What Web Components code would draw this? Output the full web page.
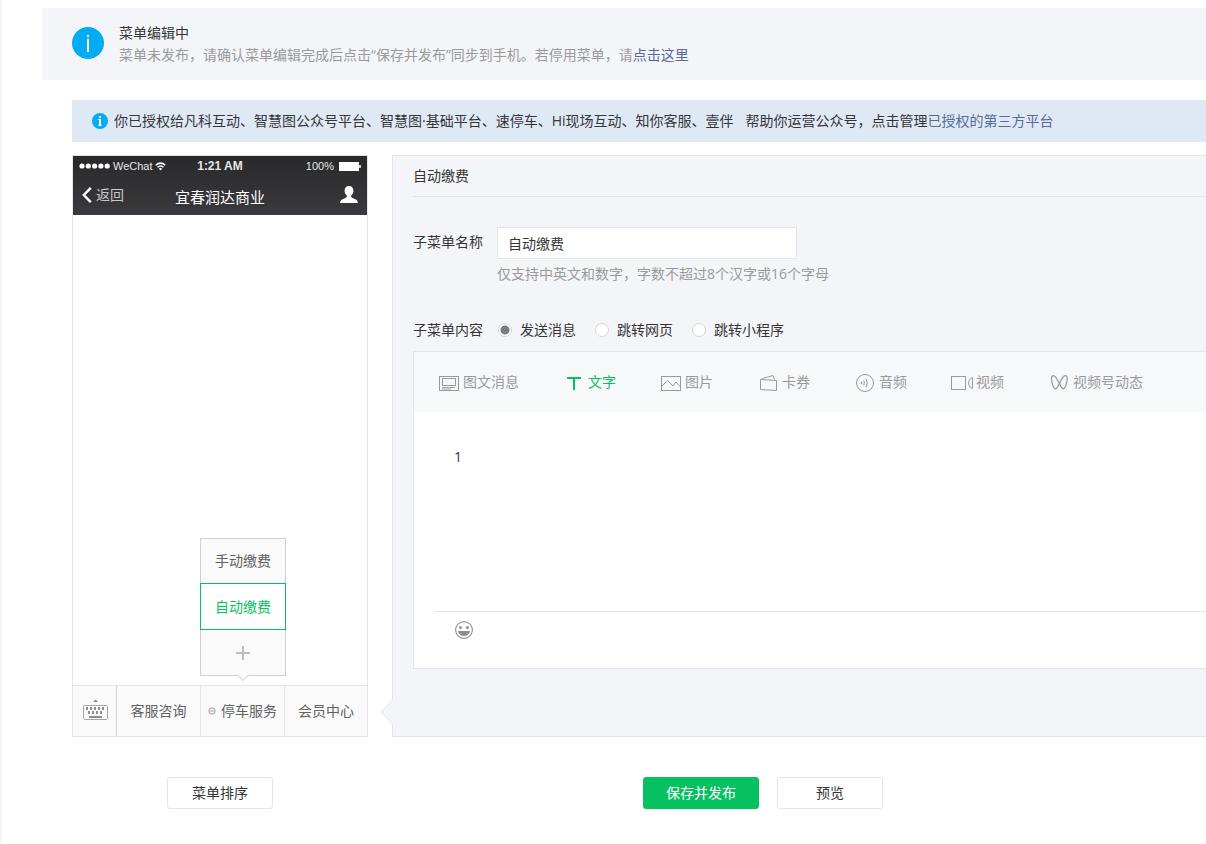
<!DOCTYPE html>
<html lang="zh-CN">
<head>
<meta charset="utf-8">
<title>自定义菜单</title>
<style>
  html { height: 100%; }
  body {
    margin: 0;
    min-height: 100%;
    background: #fff;
    overflow-x: hidden;
    color: #353535;
    font: 14px/22px "Open Sans", "Noto Sans CJK SC", sans-serif;
    --panel: #f4f5f9;
    --line: #e4e5e9;
    --muted: #9a9a9a;
    --green: #07c160;
    --link: #576b95;
  }
</style>
</head>
<body>
<menu-page></menu-page>

<script>
function define(name, markup, setup) {
  const template = document.createElement('template');
  template.innerHTML = markup;
  customElements.define(name, class extends HTMLElement {
    constructor() {
      super();
      this.attachShadow({ mode: 'open' }).append(template.content.cloneNode(true));
      if (setup) setup.call(this, this.shadowRoot);
    }
  });
}

define('info-icon', `
  <style>
    :host { display: block; flex: none; width: 16px; height: 16px; }
    :host([large]) { width: 32px; height: 32px; }
    svg { display: block; width: 100%; height: 100%; }
    .thin { display: none; }
    :host([large]) .thin { display: inline; }
    :host([large]) .thick { display: none; }
  </style>
  <svg viewBox="0 0 32 32" aria-hidden="true">
    <circle cx="16" cy="16" r="16" fill="#00adf2"/>
    <g class="thin" fill="#fff"><rect x="15" y="8" width="2" height="2.4"/><rect x="15" y="12" width="2" height="13"/></g>
    <g class="thick" fill="#fff"><rect x="14" y="6" width="4" height="4"/><path d="M12 12h6v12h2v2h-8v-2h2V14h-2z"/></g>
  </svg>`);

define('status-notice', `
  <style>
    :host { display: flex; align-items: center; gap: 15px; padding: 14px 30px; background: var(--panel); }
    info-icon { margin-bottom: 2px; }
    h1, p { margin: 0; font-size: 14px; font-weight: 400; }
    p { color: var(--muted); }
  </style>
  <info-icon large></info-icon>
  <div><h1><slot name="title"></slot></h1><p><slot></slot></p></div>`);

define('auth-notice', `
  <style>
    :host { display: flex; align-items: center; gap: 6px; padding: 10px 20px; background: #dfe9f5; white-space: nowrap; }
    p { display: flex; gap: 12px; margin: 0; }
  </style>
  <info-icon></info-icon>
  <p><slot></slot></p>`);

define('phone-header', `
  <style>
    :host { display: block; height: 59px; color: #fff; background: linear-gradient(#29292b, #3a3a3e); }
    .status, .nav { display: grid; grid-template-columns: 1fr auto 1fr; align-items: center; padding: 0 6px; }
    .status { height: 20px; font: 11px/20px "Liberation Sans", Arial, sans-serif; color: #e6e6e6; }
    .left, .right { display: flex; align-items: center; gap: 2px; }
    .right { justify-content: flex-end; gap: 5px; }
    .time { font-size: 12px; font-weight: 700; }
    .nav { height: 37px; padding: 0 9px; }
    .back { display: flex; align-items: center; gap: 4px; padding: 0; border: 0; background: none; color: #c8c8c8; font: inherit; }
    .name { padding-top: 4px; font-size: 15px; }
    svg { display: block; flex: none; }
  </style>
  <div class="status">
    <span class="left">
      <svg width="32" height="6" fill="#fff"><circle cx="3" cy="3" r="2.6"/><circle cx="9.3" cy="3" r="2.6"/><circle cx="15.6" cy="3" r="2.6"/><circle cx="21.9" cy="3" r="2.6"/><circle cx="28.2" cy="3" r="2.6"/></svg>
      <span>WeChat</span>
      <svg width="11" height="9" viewBox="0 0 11 9" fill="none" stroke="#fff" stroke-width="1.5"><path d="M.7 3.2Q5.5-.9 10.3 3.2M2.5 5.3q3-2.6 6 0"/><path d="M3.7 6.6L5.5 8.6l1.8-2q-1.8-1.3-3.6 0z" fill="#fff" stroke="none"/></svg>
    </span>
    <span class="time">1:21 AM</span>
    <span class="right">
      <span>100%</span>
      <svg width="22" height="9"><rect width="20" height="9" fill="#fff"/><rect x="20" y="3" width="2" height="3" fill="#ccc"/></svg>
    </span>
  </div>
  <div class="nav">
    <button class="back" type="button">
      <svg width="10" height="16" viewBox="0 0 10 16" fill="none" stroke="#fff" stroke-width="2.4"><path d="M8.8.8L1.8 8l7 7.2"/></svg>
      返回
    </button>
    <span class="name"><slot></slot></span>
    <span class="right">
      <svg width="18" height="18" viewBox="0 0 18 18" fill="#fff"><path d="M9 0c3 0 4.600 2 4.400 5-.1 2-1 3.400-2.200 4.600-.5 1.400.1 1.900 1.800 2.600 3 1.200 4.800 1.700 4.800 4.800H.2c0-3.100 1.800-3.600 4.800-4.800 1.700-.7 2.300-1.200 1.800-2.600C5.600 8.400 4.700 7 4.600 5 4.400 2 6 0 9 0z"/></svg>
    </span>
  </div>`);

define('sub-menu', `
  <style>
    :host { display: block; width: 86px; box-sizing: border-box; border: 1px solid #d0d0d0; background: #fafafa; }
    button { display: flex; align-items: center; justify-content: center; width: 100%; height: 44px; padding: 0; border: 0; background: none; color: #616161; font: inherit; }
    .current { box-sizing: border-box; width: 86px; height: 47px; margin: 0 -1px; border: 1px solid var(--green); background: #fff; color: var(--green); }
    .add { height: 45px; }
    .tip { position: absolute; top: calc(100% - 1px); left: 50%; margin-left: -6px; display: block; }
  </style>
  <button type="button">手动缴费</button>
  <button type="button" class="current">自动缴费</button>
  <button type="button" class="add" aria-label="添加子菜单">
    <svg width="14" height="14" stroke="#bdbdbd" stroke-width="2"><path d="M7 0v14M0 7h14"/></svg>
  </button>
  <svg class="tip" width="12" height="8"><path d="M0 0h12v1L6 7 0 1z" fill="#fafafa"/><path d="M.500 1L6 6.500 11.500 1" fill="none" stroke="#dcdcdc" stroke-width="1.200"/></svg>`);

define('phone-tabs', `
  <style>
    :host { display: flex; height: 50px; border-top: 1px solid var(--line); background: #fafafa; }
    button { display: flex; align-items: center; justify-content: center; gap: 5px; width: 100%; height: 100%; padding: 0; border: 0; background: none; color: #616161; font: inherit; }
    .keys { flex: none; width: 43px; }
    .keys button { padding-left: 2px; }
    .tab { position: relative; box-sizing: border-box; flex: 0 0 84px; border-left: 1px solid var(--line); }
    .tab:last-child { flex: 1; }
    .keys + .tab { border-color: #d0d0d0; }
    sub-menu { position: absolute; left: -1px; bottom: calc(100% + 10px); }
    svg { display: block; }
  </style>
  <div class="keys">
    <button type="button" aria-label="键盘">
      <svg width="25" height="24" viewBox="0 0 25 24" fill="#8a8d92"><path d="M10 3L12.500 .5 15 3z"/><rect x=".5" y="6.500" width="24" height="14" rx="1" fill="none" stroke="#a3a5a9"/><path d="M3 8h2v3H3zM7 8h2v3H7zM11 8h2v3h-2zM15 8h2v3h-2zM19 8h2v3h-2zM5 12h2v3H5zM9 12h2v3H9zM13 12h2v3h-2zM17 12h2v3h-2zM6 17h13v2H6z"/></svg>
    </button>
  </div>
  <div class="tab"><button type="button">客服咨询</button></div>
  <div class="tab">
    <button type="button">
      <svg width="8" height="8" fill="none" stroke="#bdbdbd" stroke-width="1.400"><circle cx="4" cy="4" r="3"/><path d="M2 4h4"/></svg>
      停车服务
    </button>
    <sub-menu></sub-menu>
  </div>
  <div class="tab"><button type="button">会员中心</button></div>`);

define('phone-preview', `
  <style>
    :host { display: flex; flex-direction: column; flex: none; box-sizing: border-box; width: 296px; min-height: 582px; border: 1px solid var(--line); background: #fff; }
    .screen { flex: 1; }
  </style>
  <phone-header><slot></slot></phone-header>
  <div class="screen"></div>
  <phone-tabs></phone-tabs>`);

const ICONS = {
  article: '<rect x=".5" y="4.500" width="19" height="14"/><rect x="3.500" y="6.500" width="13" height="7"/><path d="M3 15.500h13M3 17h9" stroke-width=".9"/>',
  text: '<path d="M3 6h14M10 6v12" stroke-width="2"/>',
  image: '<rect x=".5" y="4.500" width="19" height="14"/><path d="M1 14l5.500-5.500L12 14l3-4 4.500 5"/>',
  card: '<path d="M2.500 7.500L18.500 8.500v10L2.500 17.500zM4.500 6.500L15 3.500l1.500 4"/>',
  audio: '<circle cx="10" cy="11" r="8.500"/><path d="M6.500 9.800v2.400" stroke-width="1.500"/><path d="M8.700 8.500q1.400 2.500 0 5M11 6.700q2.700 4.300 0 8.600"/>',
  video: '<rect x="-.5" y="4.500" width="14" height="13"/><path d="M20.500 5.500v11q-4-1-4-5.500t4-5.500z"/>',
  channel: '<path d="M3.200 4.200C1.500 6 3.200 14 5.600 16.500c2 1.500 3.600-2.500 5.400-6 1.600-3.500 3.800-8 6.200-6.700 2.200 1.500.2 10.200-2 12.500-2 1.700-4-3.300-5.600-6.300-1.500-3-4.300-8-6.400-5.800z" stroke-width="1.300"/>'
};

define('content-tab', `
  <style>
    :host { display: block; flex: none; color: var(--muted); }
    :host([current]) { color: var(--green); }
    button { display: flex; align-items: center; padding: 0; border: 0; background: none; color: inherit; font: inherit; white-space: nowrap; }
    svg { display: block; overflow: visible; fill: none; stroke: currentColor; }
  </style>
  <button type="button"><svg width="24" height="20" viewBox="0 0 24 20" aria-hidden="true"></svg><slot></slot></button>`,
  function (root) {
    root.querySelector('svg').innerHTML = ICONS[this.getAttribute('icon')] || '';
  });

define('message-editor', `
  <style>
    :host { display: block; border: 1px solid var(--line); border-right: 0; background: #fff; }
    nav { display: flex; align-items: center; gap: 45px; height: 60px; padding-left: 25px; background: #f7f8fa; }
    textarea { display: block; box-sizing: border-box; width: 100%; height: 199px; padding: 34px 40px; border: 0; outline: 0; resize: none; background: none; color: inherit; font: inherit; }
    footer { margin-left: 20px; padding: 9px 21px 29px; border-top: 1px solid var(--line); }
    footer button { display: block; padding: 0; border: 0; background: none; }
    svg { display: block; }
  </style>
  <nav>
    <content-tab icon="article">图文消息</content-tab>
    <content-tab icon="text" current>文字</content-tab>
    <content-tab icon="image">图片</content-tab>
    <content-tab icon="card">卡券</content-tab>
    <content-tab icon="audio">音频</content-tab>
    <content-tab icon="video">视频</content-tab>
    <content-tab icon="channel">视频号动态</content-tab>
  </nav>
  <textarea aria-label="消息内容">1</textarea>
  <footer>
    <button type="button" aria-label="表情">
      <svg width="18" height="18" viewBox="0 0 18 18" fill="#8f8f8f"><circle cx="9" cy="9" r="8.400" fill="none" stroke="#8f8f8f" stroke-width="1.100"/><circle cx="5.500" cy="6.500" r="1.500"/><circle cx="12.500" cy="6.500" r="1.500"/><path d="M3 10h12q-1 5-6 5t-6-5z"/></svg>
    </button>
  </footer>`);

define('menu-form', `
  <style>
    :host { position: relative; display: block; flex: 1; min-width: 0; box-sizing: border-box; padding: 0 0 67px 20px; border: 1px solid var(--line); border-right: 0; background: var(--panel); }
    h2 { margin: 0; padding: 9px 0; border-bottom: 1px solid var(--line); font-size: 14px; font-weight: 400; }
    .row { display: flex; gap: 14px; }
    .field { padding-top: 30px; }
    .caption { flex: none; width: 70px; padding-top: 4px; }
    input[type=text] { display: block; box-sizing: border-box; width: 300px; height: 32px; padding: 0 10px; border: 1px solid var(--line); border-radius: 0; outline: 0; background: #fff; color: inherit; font: inherit; }
    .hint { margin: 0; padding-top: 4px; color: var(--muted); }
    fieldset { display: flex; align-items: center; gap: 15px; margin: 0; padding: 34px 0 10px; border: 0; }
    .choices { display: flex; gap: 19px; }
    .choices label { display: flex; align-items: center; gap: 8px; }
    input[type=radio] { appearance: none; width: 14px; height: 14px; margin: 0; border: 1px solid #d5d6da; border-radius: 50%; background: #fff; }
    input[type=radio]:checked { background: radial-gradient(circle, #7c7c7c 4px, #fff 5px); }
    .pointer { position: absolute; left: -13px; bottom: 11px; display: block; }
  </style>
  <h2>自动缴费</h2>
  <div class="row field">
    <label class="caption" for="name">子菜单名称</label>
    <div>
      <input type="text" id="name" value="自动缴费">
      <p class="hint">仅支持中英文和数字，字数不超过8个汉字或16个字母</p>
    </div>
  </div>
  <fieldset aria-labelledby="kind">
    <span id="kind">子菜单内容</span>
    <div class="choices">
      <label><input type="radio" name="kind" checked>发送消息</label>
      <label><input type="radio" name="kind">跳转网页</label>
      <label><input type="radio" name="kind">跳转小程序</label>
    </div>
  </fieldset>
  <message-editor></message-editor>
  <svg class="pointer" width="13" height="26"><path d="M13 0v26L1 13z" fill="#f4f5f9"/><path d="M12.500 1L1 13l11.500 12" fill="none" stroke="#e4e5e9"/></svg>`);

define('action-button', `
  <style>
    :host { display: block; }
    button { display: block; box-sizing: border-box; height: 32px; min-width: 106px; padding: 0 22px; border: 1px solid var(--line); border-radius: 3px; background: #fff; color: inherit; font: inherit; }
    :host([primary]) button { border-color: var(--green); background: var(--green); color: #fff; }
  </style>
  <button type="button"><slot></slot></button>`);

define('menu-page', `
  <style>
    :host { display: block; box-sizing: border-box; min-height: 100vh; padding: 8px 0 35px 40px; border-left: 2px solid #f6f6f6; }
    main { padding: 20px 0 0 30px; }
    .workspace { display: flex; gap: 24px; padding-top: 13px; }
    .actions { display: flex; padding-top: 40px; }
    .sort { display: flex; justify-content: center; width: 296px; }
    .publish { display: flex; gap: 18px; padding-left: 275px; }
    a { color: var(--link); text-decoration: none; }
  </style>
  <status-notice><span slot="title">菜单编辑中</span>菜单未发布，请确认菜单编辑完成后点击“保存并发布”同步到手机。若停用菜单，请<a href="#stop">点击这里</a></status-notice>
  <main>
    <auth-notice><span>你已授权给凡科互动、智慧图公众号平台、智慧图·基础平台、速停车、Hi现场互动、知你客服、壹伴</span><span>帮助你运营公众号，点击管理<a href="#third">已授权的第三方平台</a></span></auth-notice>
    <div class="workspace">
      <phone-preview>宜春润达商业</phone-preview>
      <menu-form></menu-form>
    </div>
    <div class="actions">
      <div class="sort"><action-button>菜单排序</action-button></div>
      <div class="publish"><action-button primary>保存并发布</action-button><action-button>预览</action-button></div>
    </div>
  </main>`);
</script>
</body>
</html>
